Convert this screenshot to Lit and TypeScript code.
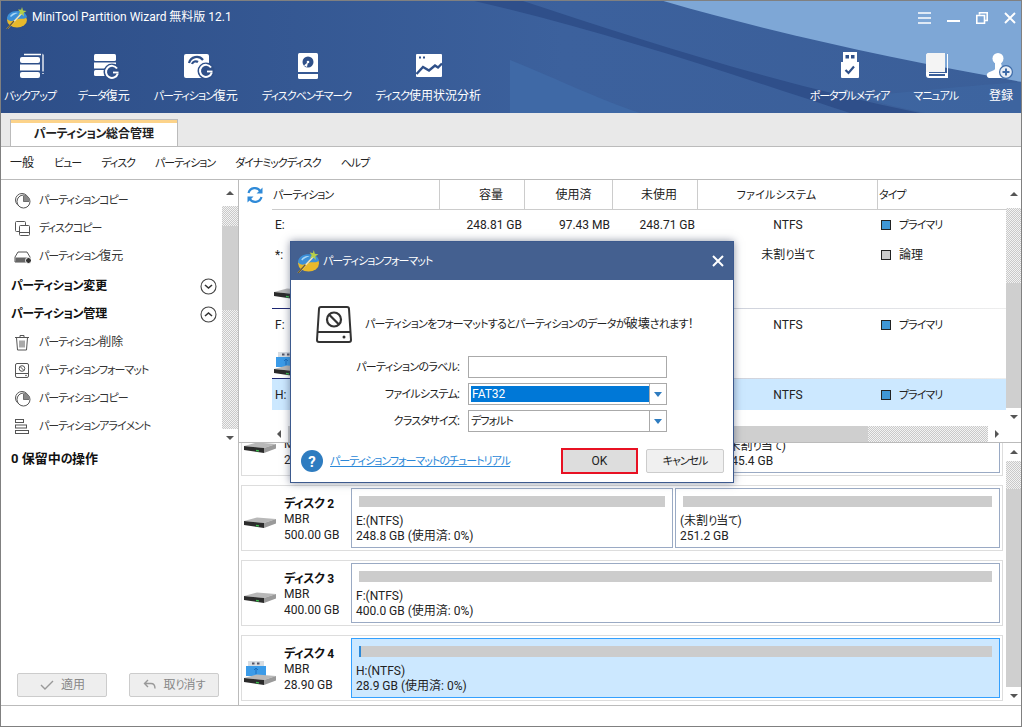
import { LitElement, html, css, svg } from "lit";
import { customElement } from "lit/decorators.js";

const NAVY = "#2f5089";

// kana in the reference are narrow, so runs of kana get their own tighter setting
const t = (s: string) =>
  s.split(/([\u3040-\u30ff]+)/).map((p, i) => (i % 2 ? html`<span class="k">${p}</span>` : p));

const logo = (size: number) => html`<svg width=${size} height=${size} viewBox="0 0 22 22">
  <ellipse cx="12" cy="13" rx="10" ry="7.5" fill="#e8b92c" />
  <path d="M2 12c0-5 4-8 10-8s9 2 10 6c-3 3-6 1-9 2s-7 4-11 0z" fill="#3c8fd8" />
  <path d="M5 9c2-3 5-4 8-3-3 1-5 2-7 4z" fill="#a8d6f5" />
  <path d="M2 22 17 6" stroke="#f2e6c0" stroke-width="1.4" />
  <path d="M2 22 9 14" stroke="#6b5a2a" stroke-width="1.4" />
  <path d="M17 0l1 3.5 3.500 .5-3 2 .5 3.500-2.500-2.500-3 1 1.500-3-2-2.500 3.200 .3z" fill="#b6cf4a" />
</svg>`;

const cycle = (cx: number, cy: number) => svg`
  <circle cx=${cx} cy=${cy} r="8.500" fill=${NAVY} />
  <path d="M${cx + 5} ${cy - 3.500}A6 6 0 1 0 ${cx + 5.800} ${cy + 1.500}" fill="none" stroke="#fff" stroke-width="2" />
  <path d="M${cx + 6.500} ${cy + .5}H${cx + 1}" stroke="#fff" stroke-width="1.800" />`;

const tools: Record<string, unknown> = {
  backup: svg`<path d="M10 2.500H29M29 2.500V22" fill="none" stroke="#fff" stroke-width="1.300" stroke-dasharray="17 1.500 4 1" />
    <rect x="6" y="5" width="20" height="6" rx="2" fill="#fff" /><rect x="6" y="12.500" width="20" height="6" fill="#fff" /><rect x="6" y="20" width="20" height="6" rx="2" fill="#fff" />`,
  data: svg`<rect x="6" y="2" width="22" height="7" rx="1.500" fill="#fff" /><rect x="6" y="10.500" width="22" height="6" fill="#fff" /><rect x="6" y="18" width="20" height="6" rx="1.500" fill="#fff" />${cycle(24, 20)}`,
  part: svg`<rect x="4" y="2" width="25" height="24" rx="2" fill="#fff" />
    <path d="M9 11a8 8 0 0 1 14-3" fill="none" stroke=${NAVY} stroke-width="2.200" /><path d="M12 12a4 4 0 0 1 6-2" fill="none" stroke=${NAVY} stroke-width="2.200" />${cycle(26, 19)}`,
  bench: svg`<path d="M8.500 1h17A1.500 1.500 0 0 1 27 2.500V20H7V2.500A1.500 1.500 0 0 1 8.500 1z" fill="#fff" /><path d="M7 22h20v3.500a1.500 1.500 0 0 1-1.500 1.500h-17A1.500 1.500 0 0 1 7 25.500z" fill="#fff" />
    <circle cx="17" cy="10" r="5.500" fill=${NAVY} /><path d="M17 10l-4 3.500 3 1.500z" fill="#fff" /><circle cx="17" cy="10" r="1.300" fill="#fff" />`,
  chart: svg`<rect x="4" y="2" width="26" height="23" rx="1" fill="#fff" /><rect x="7" y="4.500" width="2" height="2" fill=${NAVY} /><rect x="11" y="4.500" width="2" height="2" fill=${NAVY} />
    <path d="M4.500 22 11 15l6 3.500 6-5 3 2 4-4" fill="none" stroke=${NAVY} stroke-width="2.400" />`,
  usb: svg`<path d="M9 0h14v10H9z" fill="#fff" /><rect x="11.500" y="3" width="3.500" height="3.500" fill=${NAVY} /><rect x="17" y="3" width="3.500" height="3.500" fill=${NAVY} />
    <path d="M7 10h18v15a1 1 0 0 1-1 1H8a1 1 0 0 1-1-1z" fill="#fff" /><path d="M11.500 18l3 3 5.500-6.500" fill="none" stroke=${NAVY} stroke-width="2.200" />`,
  book: svg`<path d="M9 1a3 3 0 0 0-3 3v19a3 3 0 0 0 3 3h19V2h-1v19H9z" fill="#fff" /><path d="M6 4a3 3 0 0 1 3-3h16v19H6z" fill="#f4f4f4" />
    <path d="M9 23h16" stroke="#3b5f99" stroke-width="2" />`,
  user: svg`<circle cx="13" cy="6.500" r="5.500" fill="#fff" /><path d="M10 11h6l1 4 7 4-4 7H4a3 3 0 0 1-2-4c2-3 7-3 8-5z" fill="#fff" />
    <circle cx="21" cy="20" r="7" fill="#3f6ca8" /><circle cx="21" cy="20" r="5.800" fill="#e8eef6" /><path d="M17.500 20h7M21 16.500v7" stroke="#3f6ca8" stroke-width="2" />`,
};

const side: Record<string, unknown> = {
  copy: svg`<g fill="none" stroke="#555"><circle cx="8" cy="8" r="6.500" /><circle cx="9.500" cy="9.500" r="6.500" fill="#fff" /><path d="M9.500 4v5.500H15" /></g><path d="M9.500 9.500V3a6.500 6.500 0 0 1 6.500 6.500z" fill="#888" />`,
  disk: svg`<g fill="none" stroke="#555"><path d="M5.500 11.500H2.500a1 1 0 0 1-1-1v-8a1 1 0 0 1 1-1h8a1 1 0 0 1 1 1V5" /><rect x="5.500" y="5.500" width="10" height="10" rx="1" fill="#fff" /><path d="M5.500 12.500h10" /></g>`,
  restore: svg`<path d="M4 4h9l3 5v5H1V9z" fill="#fff" stroke="#555" /><path d="M1.500 9.500h14v4.500h-14z" fill="#666" /><circle cx="14.500" cy="12.500" r="3" fill="#333" stroke="#fff" />`,
  trash: svg`<g fill="none" stroke="#555"><path d="M1 3.500h14M6 3.500V1.500h4v2M2.500 3.500l1 12.500h9l1-12.500M6 6.500v7M8 6.500v7M10 6.500v7" /></g>`,
  format: svg`<g fill="none" stroke="#555"><rect x="1.500" y="1.500" width="13" height="14" rx="1.500" /><path d="M1.500 11.500h13" /><circle cx="8" cy="6.500" r="2.800" /><path d="M6 4.500l4 4" /></g><circle cx="12" cy="13.500" r=".8" fill="#555" />`,
  align: svg`<g fill="none" stroke="#555"><rect x="1.500" y="1.500" width="8" height="3" /><rect x="1.500" y="7" width="11" height="3" /><rect x="1.500" y="12.500" width="13" height="3" /></g>`,
};

const driveShape = svg`<path d="M0 4 13 .5 32 2 20 6z" fill="#b8b8b8" /><path d="M0 4 20 6V11L0 8z" fill="#2b2b2b" />
  <path d="M20 6 32 2V6.500L20 11z" fill="#9a9a9a" /><path d="M12 8.500l3 .4" stroke="#3fbf50" stroke-width="1.300" />`;

const drive = () => html`<svg class="drv" width="33" height="11" viewBox="0 0 33 11">${driveShape}</svg>`;

const usbDrive = () => html`<svg class="drv" width="33" height="24" viewBox="0 0 33 24">
  <rect x="4" y="0" width="16" height="5" fill="#d8dde2" /><rect x="8" y="1.500" width="2.500" height="2" fill="#556" /><rect x="13" y="1.500" width="2.500" height="2" fill="#556" />
  <rect x="2" y="5" width="20" height="10" fill="#3b9be8" /><path d="M12 7v6M10 9l2-2 2 2" stroke="#1b6fc0" fill="none" />
  <g transform="translate(0 13)">${driveShape}</g>
</svg>`;

const SIDE_TOP = [["copy", "パーティションコピー"], ["disk", "ディスクコピー"], ["restore", "パーティション復元"]];
const SIDE_MANAGE = [["trash", "パーティション削除"], ["format", "パーティションフォーマット"], ["copy", "パーティションコピー"], ["align", "パーティションアライメント"]];

@customElement("app-root")
export class AppRoot extends LitElement {
  static styles = css`
    :host { display: block; width: 1022px; height: 727px; font: 12px/15px Roboto, "Noto Sans CJK JP", sans-serif; color: #222; font-feature-settings: "palt"; }
    * { box-sizing: border-box; }
    .win { position: relative; height: 727px; display: flex; flex-direction: column; border: 1px solid #808080; background: #fff; overflow: hidden; }
    .k { font-size: 11px; letter-spacing: -1px; }
    .tab .k, .sec .k, .pending .k, .info b .k { font-size: 12px; letter-spacing: -0.45px; }
    .msg .k, .form label .k { letter-spacing: -0.72px; }

    .head { position: relative; height: 112px; flex: none; color: #fff; overflow: hidden; }
    .wave { position: absolute; left: -1px; top: -1px; }
    .titlebar { position: relative; height: 33px; display: flex; align-items: center; padding-left: 4px; gap: 5px; }
    .winbtns { margin-left: auto; display: flex; align-items: center; gap: 16px; padding-right: 5px; }
    .winbtns svg { display: block; }
    .tools { position: relative; display: flex; gap: 24px; padding: 18px 8px 0 3px; }
    .tool { display: flex; flex-direction: column; align-items: center; gap: 9px; white-space: nowrap; }
    .tool:first-child { margin-right: -2px; }
    .tool svg { display: block; overflow: visible; margin: 0 -12px; }
    .push { margin-left: auto; }
    .last { margin-left: 7px; }

    .tabs { height: 34px; flex: none; background: #e9e9e9; border-bottom: 1px solid #bbb; padding: 6px 0 0 9px; }
    .tab { width: 168px; height: 27px; background: linear-gradient(#fcd38a 0 3px, #fff 3px); border: 1px solid #bbb; border-bottom: 0; font-weight: 700; display: flex; align-items: center; justify-content: center; padding: 3px 0 0 0; }
    .menu { height: 33px; flex: none; border-bottom: 1px solid #bbb; display: flex; align-items: center; gap: 20px; padding-left: 9px; }

    .body { flex: 1; display: flex; min-height: 0; }
    .side { width: 238px; flex: none; border-right: 1px solid #bbb; display: flex; flex-direction: column; padding-bottom: 8px; }
    .side-top { height: 266px; display: flex; overflow: hidden; }
    .side-list { flex: 1; padding: 6px 0 0 0; min-width: 0; }
    .item { height: 28px; display: flex; align-items: center; gap: 8px; padding-left: 13px; white-space: nowrap; color: #333; }
    .item svg { flex: none; }
    .sec { height: 28px; display: flex; align-items: center; justify-content: space-between; padding: 0 5px 0 10px; font-weight: 700; color: #111; }
    .sec.first { margin-top: 2px; }
    .pending { height: 26px; display: flex; align-items: center; padding-left: 10px; font-weight: 700; font-size: 13px; color: #111; }
    .actions { margin-top: auto; display: flex; gap: 22px; padding-left: 16px; }
    .act { width: 90px; height: 24px; background: #eee; border: 1px solid #ccc; border-radius: 2px; color: #888; display: flex; align-items: center; justify-content: center; gap: 6px; }

    .sb { width: 16px; flex: none; display: flex; flex-direction: column; }
    .sb.nar { width: 15px; }
    .arr { flex: none; display: flex; align-items: center; justify-content: center; }
    .arr::after { content: ""; border: 4px solid transparent; }
    .arr.up::after { border-bottom: 4px solid #555; border-top-width: 0; }
    .arr.dn::after { border-top: 4px solid #555; border-bottom-width: 0; }
    .arr.lf::after { border-right: 4px solid #555; border-left-width: 0; }
    .arr.rt::after { border-left: 4px solid #555; border-right-width: 0; }
    .chk { background: repeating-conic-gradient(#c9c9c9 0 25%, #f3f3f3 0 50%) 0 0 / 2px 2px; }
    .thumb { background: #cfcfcf; }

    .main { flex: 1; min-width: 0; display: flex; flex-direction: column; }
    .tbl-area { height: 263px; flex: none; border-bottom: 1px solid #bbb; display: flex; flex-direction: column; }
    .tbl-top { height: 246px; display: flex; }
    .tbl { flex: 1; min-width: 0; }
    .row { display: grid; grid-template-columns: 33px 168px 85px 88px 85px 180px 128px; align-items: center; height: 30px; white-space: nowrap; }
    .row.hd { height: 29px; }
    .row.hd > div { height: 100%; display: flex; align-items: center; justify-content: center; border-right: 1px solid #ccc; padding-top: 2px; }
    .row.hd > div:first-child { border: 0; padding-top: 0; }
    .row.hd > div:nth-child(2) { justify-content: flex-start; padding-left: 1px; }
    .row.hd > div:nth-child(3) { padding-left: 18px; }
    .row.hd > div:nth-child(4) { padding-left: 10px; }
    .row.hd > div:nth-child(5) { padding-left: 8px; }
    .row.hd > div:nth-child(6) { padding-right: 22px; }
    .row.hd > div:nth-child(6) .k { letter-spacing: 0.2px; }
    .row.hd > div:last-child { justify-content: flex-start; border: 0; padding-left: 1px; }
    .hline { height: 1px; margin-left: 33px; background: #ccc; }
    .row .num { text-align: right; padding-right: 3px; }
    .row .mid { text-align: center; }
    .row .nm { padding-left: 3px; }
    .row .ty { display: flex; align-items: center; gap: 8px; padding-left: 3px; }
    .row.b { height: 31px; padding-top: 1px; }
    .row.sel { margin-left: 33px; grid-template-columns: 168px 85px 88px 85px 180px 128px; background: #cce8ff; }
    .sw { width: 10px; height: 10px; border: 1px solid #222; background: #3f97d6; }
    .sw.g { background: #ccc; }
    .dh { height: 39px; margin-left: 33px; padding: 18px 0 0 2px; border-bottom: 1px solid; border-image: linear-gradient(90deg, #1a2470, #c8ccd8 55%, #eee) 1; }
    .dh.u { padding-top: 12px; }
    .dh svg { display: block; }
    .hsb { height: 16px; margin-right: 15px; display: flex; }
    .hsb .thumb { width: 580px; }
    .hsb .chk { width: 120px; }
    .hsb .arr { width: 18px; }
    .hsb .arr.lf { width: 18px; margin-left: 31px; }

    .disks { flex: 1; min-height: 0; display: flex; }
    .cards { flex: 1; min-width: 0; padding-left: 2px; overflow: hidden; }
    .card { width: 762px; height: 66px; border: 1px solid #ddd; margin-bottom: 9px; display: flex; padding: 2px 2px 2px 0; }
    .card.top { margin-top: -33px; }
    .info { width: 109px; flex: none; display: flex; align-items: center; padding: 4px 0 0 2px; gap: 7px; }
    .info .t { line-height: 15.5px; white-space: nowrap; }
    .info b { display: block; color: #111; }
    .info .drv { flex: none; margin-top: 5px; }
    .pt { border: 1px solid #9aaac4; padding: 7px 7px 0 4px; margin-right: 2px; white-space: nowrap; overflow: hidden; }
    .pt:last-child { margin-right: 0; }
    .pt.sel { border-color: #33a0ff; background: #cce8ff; }
    .bar { height: 11px; margin: 0 0 7px 3px; background: #ccc; }
    .pt.sel .bar { border-left: 2px solid #2b88d8; }

    .status { height: 21px; flex: none; border-top: 1px solid #bbb; }

    .dlg { position: absolute; left: 289px; top: 240px; width: 444px; height: 242px; background: #fff; border: 1px solid #3d5a8e; box-shadow: 0 0 8px rgba(50, 60, 90, .55); display: flex; flex-direction: column; }
    .dlg-t { height: 38px; flex: none; background: #446090; color: #fff; display: flex; align-items: center; padding: 0 9px 0 5px; gap: 4px; }
    .dlg-t svg:last-child { margin-left: auto; }
    .msg { display: flex; align-items: center; gap: 13px; padding: 26px 0 0 25px; }
    .msg svg { flex: none; display: block; }
    .form { display: grid; grid-template-columns: 169px 199px; column-gap: 8px; row-gap: 5px; margin-top: 13px; grid-auto-rows: 22px; align-items: center; }
    .form label { text-align: right; }
    .inp { height: 22px; border: 1px solid #aaa; display: flex; align-items: stretch; background: #fff; }
    .val { flex: 1; display: flex; align-items: center; padding-left: 2px; margin: 0; }
    .val.on { background: #0078d7; color: #fff; margin: 2px 0 2px 2px; padding-left: 1px; }
    .drop { width: 17px; border-left: 1px solid #aaa; margin-left: 0; display: flex; align-items: center; justify-content: center; }
    .drop::after { content: ""; border: 4.500px solid transparent; border-top: 5px solid #2e7cc0; border-bottom-width: 0; }
    .foot { display: flex; align-items: center; margin-top: 16px; padding: 0 9px 0 10px; }
    .foot a { margin-left: 7px; color: #2b88d8; text-decoration: underline; white-space: nowrap; }
    .ok { margin-left: auto; width: 77px; height: 26px; background: #ddd; border: 2px solid #e81123; display: flex; align-items: center; justify-content: center; }
    .cancel { margin-left: 8px; width: 78px; height: 24px; background: #f0f0f0; border: 1px solid #ccc; border-radius: 2px; display: flex; align-items: center; justify-content: center; }
  `;

  private bar(cls: string, parts: [string, number][]) {
    return html`<div class="sb ${cls}">
      ${parts.map(([c, h]) => html`<div class=${c} style="height:${h}px"></div>`)}
    </div>`;
  }

  private tool(name: string, label: string, cls = "") {
    return html`<div class="tool ${cls}">
      <svg width="32" height="28" viewBox="0 0 32 28">${tools[name]}</svg>
      <span>${t(label)}</span>
    </div>`;
  }

  private item([icon, label]: string[]) {
    return html`<div class="item"><svg width="17" height="17" viewBox="0 0 17 17">${side[icon]}</svg><span>${t(label)}</span></div>`;
  }

  private chev(up: boolean) {
    return html`<svg width="17" height="17" viewBox="0 0 17 17">
      <circle cx="8.500" cy="8.500" r="7.500" fill="#fff" stroke="#444" stroke-width="1.100" />
      <path d=${up ? "M5 10l3.500-3 3.500 3" : "M5 7l3.500 3 3.500-3"} fill="none" stroke="#333" stroke-width="1.600" />
    </svg>`;
  }

  private row(name: string, cap: string, used: string, free: string, fs: string, type: string, cls = "", gray = false) {
    const sel = cls.includes("sel");
    return html`<div class="row ${cls}">
      ${sel ? "" : html`<div></div>`}
      <div class="nm">${name}</div>
      <div class="num">${cap}</div><div class="num">${used}</div><div class="num">${free}</div>
      <div class="mid">${t(fs)}</div>
      <div class="ty"><span class="sw ${gray ? "g" : ""}"></span><span>${t(type)}</span></div>
    </div>`;
  }

  private part(w: number, l1: string, l2: string, sel = false) {
    return html`<div class="pt ${sel ? "sel" : ""}" style="width:${w}px">
      <div class="bar"></div><div>${t(l1)}</div><div>${t(l2)}</div>
    </div>`;
  }

  private card(name: string, size: string, parts: unknown, usb = false, cls = "") {
    return html`<div class="card ${cls}">
      <div class="info">
        ${usb ? usbDrive() : drive()}
        <div class="t"><b>${t(name)}</b>MBR<br />${size}</div>
      </div>
      ${parts}
    </div>`;
  }

  render() {
    return html`<div class="win">
      <div class="head">
        <svg class="wave" width="1022" height="113" viewBox="0 0 1022 113">
          <defs><linearGradient id="bg" x1="0" x2="1"><stop offset="0" stop-color="#2d4e88" /><stop offset=".55" stop-color="#3c619d" /><stop offset="1" stop-color="#3b5f99" /></linearGradient></defs>
          <rect width="1022" height="113" fill="url(#bg)" />
          <path d="M510 60C560 80 600 100 640 113H510z" fill="#3f69a6" />
          <path d="M470 0H520C640 40 780 85 920 113H850C720 70 600 30 470 0z" fill="#2f4f8a" />
          <path d="M660 0H1022V82C900 60 780 35 660 0z" fill="#7ea7d6" />
          <path d="M1022 82V113H925C900 108 880 103 860 97 920 90 980 85 1022 82z" fill="#3f6aa5" opacity=".5" />
        </svg>
        <div class="titlebar">
          ${logo(22)}<span>MiniTool Partition Wizard 無料版 12.1</span>
          <div class="winbtns">
            <svg width="13" height="12" viewBox="0 0 13 12"><path d="M0 1h13M0 6h13M0 11h13" stroke="#fff" stroke-width="1.600" /></svg>
            <svg width="13" height="12" viewBox="0 0 13 12"><path d="M0 9h13" stroke="#fff" stroke-width="2" /></svg>
            <svg width="12" height="12" viewBox="0 0 12 12"><path d="M3.500 2.500V.8h7.700v7.700H9M.8 3.500h7.700v7.700H.8z" fill="none" stroke="#fff" stroke-width="1.600" /></svg>
            <svg width="12" height="12" viewBox="0 0 12 12"><path d="M1 1l10 10M11 1 1 11" stroke="#fff" stroke-width="1.900" /></svg>
          </div>
        </div>
        <div class="tools">
          ${this.tool("backup", "バックアップ")}
          ${this.tool("data", "データ復元")}
          ${this.tool("part", "パーティション復元")}
          ${this.tool("bench", "ディスクベンチマーク")}
          ${this.tool("chart", "ディスク使用状況分析")}
          ${this.tool("usb", "ポータブルメディア", "push")}
          ${this.tool("book", "マニュアル")}
          ${this.tool("user", "登録", "last")}
        </div>
      </div>

      <div class="tabs"><div class="tab">${t("パーティション総合管理")}</div></div>
      <div class="menu">
        ${["一般", "ビュー", "ディスク", "パーティション", "ダイナミックディスク", "ヘルプ"].map((m) => html`<span>${t(m)}</span>`)}
      </div>

      <div class="body">
        <div class="side">
          <div class="side-top">
            <div class="side-list">
              ${SIDE_TOP.map((i) => this.item(i))}
              <div class="sec first"><span>${t("パーティション変更")}</span>${this.chev(false)}</div>
              <div class="sec"><span>${t("パーティション管理")}</span>${this.chev(true)}</div>
              ${SIDE_MANAGE.map((i) => this.item(i))}
            </div>
            ${this.bar("", [["arr up", 26], ["chk", 20], ["thumb", 84], ["chk", 119], ["arr dn", 17]])}
          </div>
          <div class="pending"><span>${t("0 保留中の操作")}</span></div>
          <div class="actions">
            <div class="act"><svg width="16" height="12" viewBox="0 0 16 12"><path d="M2 6l4 4 8-8" fill="none" stroke="#999" stroke-width="1.400" /></svg><span>適用</span></div>
            <div class="act"><svg width="14" height="12" viewBox="0 0 14 12"><path d="M5 1 1.500 4.500 5 8M2 4.500h6c3 0 4 2 4 5" fill="none" stroke="#999" stroke-width="1.400" /></svg><span>${t("取り消す")}</span></div>
          </div>
        </div>

        <div class="main">
          <div class="tbl-area">
            <div class="tbl-top">
              <div class="tbl">
                <div class="row hd">
                  <div>
                    <svg width="33" height="18" viewBox="0 0 33 18"><g fill="none" stroke="#2f8ad8" stroke-width="2.200"><path d="M9.500 7a6.500 6.500 0 0 1 12-1.500" /><path d="M22.500 11a6.500 6.500 0 0 1-12 1.500" /></g><path d="M23.500 1.500v6h-6zM8.500 16.500v-6h6z" fill="#2f8ad8" /></svg>
                  </div>
                  <div>${t("パーティション")}</div><div>容量</div><div>${t("使用済")}</div><div>${t("未使用")}</div><div>${t("ファイルシステム")}</div><div>${t("タイプ")}</div>
                </div>
                <div class="hline"></div>
                ${this.row("E:", "248.81 GB", "97.43 MB", "248.71 GB", "NTFS", "プライマリ")}
                ${this.row("*:", "", "", "", "未割り当て", "論理", "", true)}
                <div class="dh">${drive()}</div>
                ${this.row("F:", "", "", "", "NTFS", "プライマリ", "b")}
                <div class="dh u">${usbDrive()}</div>
                ${this.row("H:", "", "", "", "NTFS", "プライマリ", "b sel")}
              </div>
              ${this.bar("nar", [["arr up", 28], ["chk", 75], ["thumb", 125], ["arr dn", 18]])}
            </div>
            <div class="hsb"><div class="arr lf"></div><div class="thumb"></div><div class="chk"></div><div class="arr rt"></div></div>
          </div>

          <div class="disks">
            <div class="cards">
              ${this.card("ディスク 1", "298.09 GB", html`${this.part(367, "", "")}${this.part(281, "(未割り当て)", "245.4 GB")}`, false, "top")}
              ${this.card("ディスク 2", "500.00 GB", html`${this.part(323, "E:(NTFS)", "248.8 GB (使用済: 0%)")}${this.part(326, "(未割り当て)", "251.2 GB")}`)}
              ${this.card("ディスク 3", "400.00 GB", this.part(650, "F:(NTFS)", "400.0 GB (使用済: 0%)"))}
              ${this.card("ディスク 4", "28.90 GB", this.part(650, "H:(NTFS)", "28.9 GB (使用済: 0%)", true), true)}
            </div>
            ${this.bar("nar", [["arr up", 18], ["chk", 28], ["thumb", 198], ["arr dn", 18]])}
          </div>
        </div>
      </div>
      <div class="status"></div>

      <div class="dlg">
        <div class="dlg-t">
          ${logo(23)}<span>${t("パーティションフォーマット")}</span>
          <svg width="12" height="12" viewBox="0 0 12 12"><path d="M1 1l10 10M11 1 1 11" stroke="#fff" stroke-width="2" /></svg>
        </div>
        <div class="msg">
          <svg width="36" height="37" viewBox="0 0 36 37"><g fill="none" stroke="#333" stroke-width="2"><path d="M5 1h26a2 2 0 0 1 2 2l2 31a2 2 0 0 1-2 2H3a2 2 0 0 1-2-2L3 3a2 2 0 0 1 2-2z" /><path d="M1.500 26h33" /><circle cx="18" cy="13.500" r="7" stroke-width="2.200" /><path d="M13 8.500l10 10" stroke-width="2.200" /></g><circle cx="28" cy="31" r="1.500" fill="#333" /></svg>
          <span>${t("パーティションをフォーマットするとパーティションのデータが破壊されます！")}</span>
        </div>
        <div class="form">
          <label>${t("パーティションのラベル:")}</label><div class="inp"></div>
          <label>${t("ファイルシステム:")}</label><div class="inp"><div class="val on">FAT32</div><div class="drop"></div></div>
          <label>${t("クラスタサイズ:")}</label><div class="inp"><div class="val">${t("デフォルト")}</div><div class="drop"></div></div>
        </div>
        <div class="foot">
          <svg width="22" height="22" viewBox="0 0 22 22"><circle cx="11" cy="11" r="11" fill="#2e7cc0" /><text x="11" y="16.500" text-anchor="middle" fill="#fff" font-size="15" font-weight="700" font-family="Roboto">?</text></svg>
          <a>${t("パーティションフォーマットのチュートリアル")}</a>
          <div class="ok">OK</div>
          <div class="cancel">${t("キャンセル")}</div>
        </div>
      </div>
    </div>`;
  }
}
